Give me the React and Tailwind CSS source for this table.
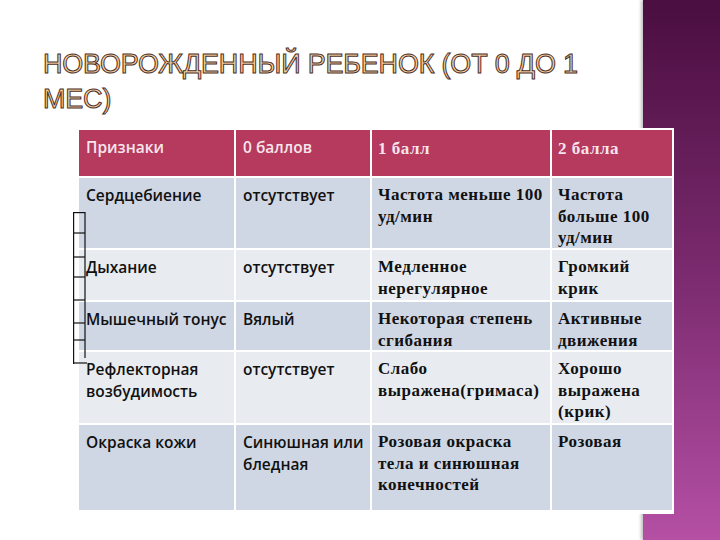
import React from "react";

const sans = "font-['Open_Sans',sans-serif]";
const serif = "font-['Liberation_Serif',serif]";

// rows of the Apgar table
const rows = [
  {
    h: "h-[72px]",
    bg: "bg-[#cfd6e4]",
    cells: ["Сердцебиение", "отсутствует", "Частота меньше 100\nуд/мин", "Частота\nбольше 100\nуд/мин"],
  },
  {
    h: "h-[52px]",
    bg: "bg-[#e8ecf1]",
    cells: ["Дыхание", "отсутствует", "Медленное\nнерегулярное", "Громкий\nкрик"],
  },
  {
    h: "h-[50px]",
    bg: "bg-[#cfd6e4]",
    cells: ["Мышечный тонус", "Вялый", "Некоторая степень\nсгибания", "Активные\nдвижения"],
  },
  {
    h: "h-[73px]",
    bg: "bg-[#e8ecf1]",
    cells: ["Рефлекторная\nвозбудимость", "отсутствует", "Слабо\nвыражена(гримаса)", "Хорошо\nвыражена\n(крик)"],
  },
  {
    h: "h-[87px]",
    bg: "bg-[#cfd6e4]",
    cells: ["Окраска кожи", "Синюшная или\nбледная", "Розовая окраска\nтела и синюшная\nконечностей", "Розовая"],
  },
];

const widths = ["w-[157px]", "w-[136px]", "w-[180px]", "w-[120px]"];

function Cell({ i, children }) {
  const font =
    i < 2
      ? `${sans} text-[15.5px] font-semibold leading-[22px] pl-[7px]`
      : `${serif} text-[17px] font-bold leading-[21.5px] tracking-[0.5px] pl-[6px]`;
  return (
    <div className={`${widths[i]} shrink-0 whitespace-pre-line border-r-2 border-white last:border-r-0 pt-[6px] ${font}`}>
      {children}
    </div>
  );
}

export default function App() {
  return (
    <div className="flex w-[720px] h-[540px] bg-white overflow-hidden">
      <div className="flex-1 min-w-0 relative z-10">
        <h1 className="ml-[43px] mt-[47px] w-[560px] text-[27px] leading-[35px] font-['Liberation_Sans',sans-serif] text-[#f8cfa6] [-webkit-text-stroke:1px_#4b3026] tracking-[-0.2px]">
          НОВОРОЖДЕННЫЙ РЕБЕНОК (ОТ 0 ДО 1 МЕС)
        </h1>

        <div className="relative ml-[79px] mt-[13px] w-[593px] text-[#111] outline-2 outline-white">
          {/* header */}
          <div className="flex h-[48px] bg-[#b6395e] text-[#f6e6ec] border-b-2 border-white">
            <div className={`${widths[0]} shrink-0 border-r-2 border-white pt-[6px] pl-[7px] ${sans} text-[15.5px] font-semibold`}>
              Признаки
            </div>
            <div className={`${widths[1]} shrink-0 border-r-2 border-white pt-[6px] pl-[7px] ${sans} text-[15.5px] font-semibold`}>
              0 баллов
            </div>
            <div className={`${widths[2]} shrink-0 border-r-2 border-white pt-[6px] pl-[6px] ${serif} text-[17px] font-bold tracking-[0.5px]`}>
              1 балл
            </div>
            <div className={`${widths[3]} shrink-0 pt-[6px] pl-[6px] ${serif} text-[17px] font-bold tracking-[0.5px]`}>
              2 балла
            </div>
          </div>

          {rows.map((r, ri) => (
            <div key={ri} className={`flex ${r.h} ${r.bg} border-b-2 border-white last:border-b-0`}>
              {r.cells.map((c, ci) => (
                <Cell key={ci} i={ci}>
                  {c}
                </Cell>
              ))}
            </div>
          ))}

          {/* stray little boxes on the left edge */}
          <svg className="absolute left-[-6px] top-[82px]" width="14" height="152" viewBox="0 0 14 152">
            <g stroke="#111" strokeWidth="1.2" fill="none">
              <line x1="0.6" y1="0" x2="0.6" y2="152" />
              <line x1="12" y1="0" x2="12" y2="146" />
              <line x1="0" y1="0.6" x2="12" y2="0.6" />
              <line x1="0" y1="21" x2="12" y2="21" />
              <line x1="0" y1="45" x2="12" y2="45" />
              <line x1="0" y1="65" x2="12" y2="65" />
              <line x1="0" y1="88" x2="12" y2="88" />
              <line x1="0" y1="111" x2="12" y2="111" />
              <line x1="0" y1="128" x2="12" y2="128" />
              <line x1="0" y1="151" x2="14" y2="151" />
            </g>
          </svg>
        </div>
      </div>
      <div className="w-[77px] shrink-0 h-full bg-gradient-to-b from-[#4a0e40] via-[#7a2a6e] to-[#b550a5] shadow-[-2px_0_3px_rgba(0,0,0,0.25)]" />
    </div>
  );
}
